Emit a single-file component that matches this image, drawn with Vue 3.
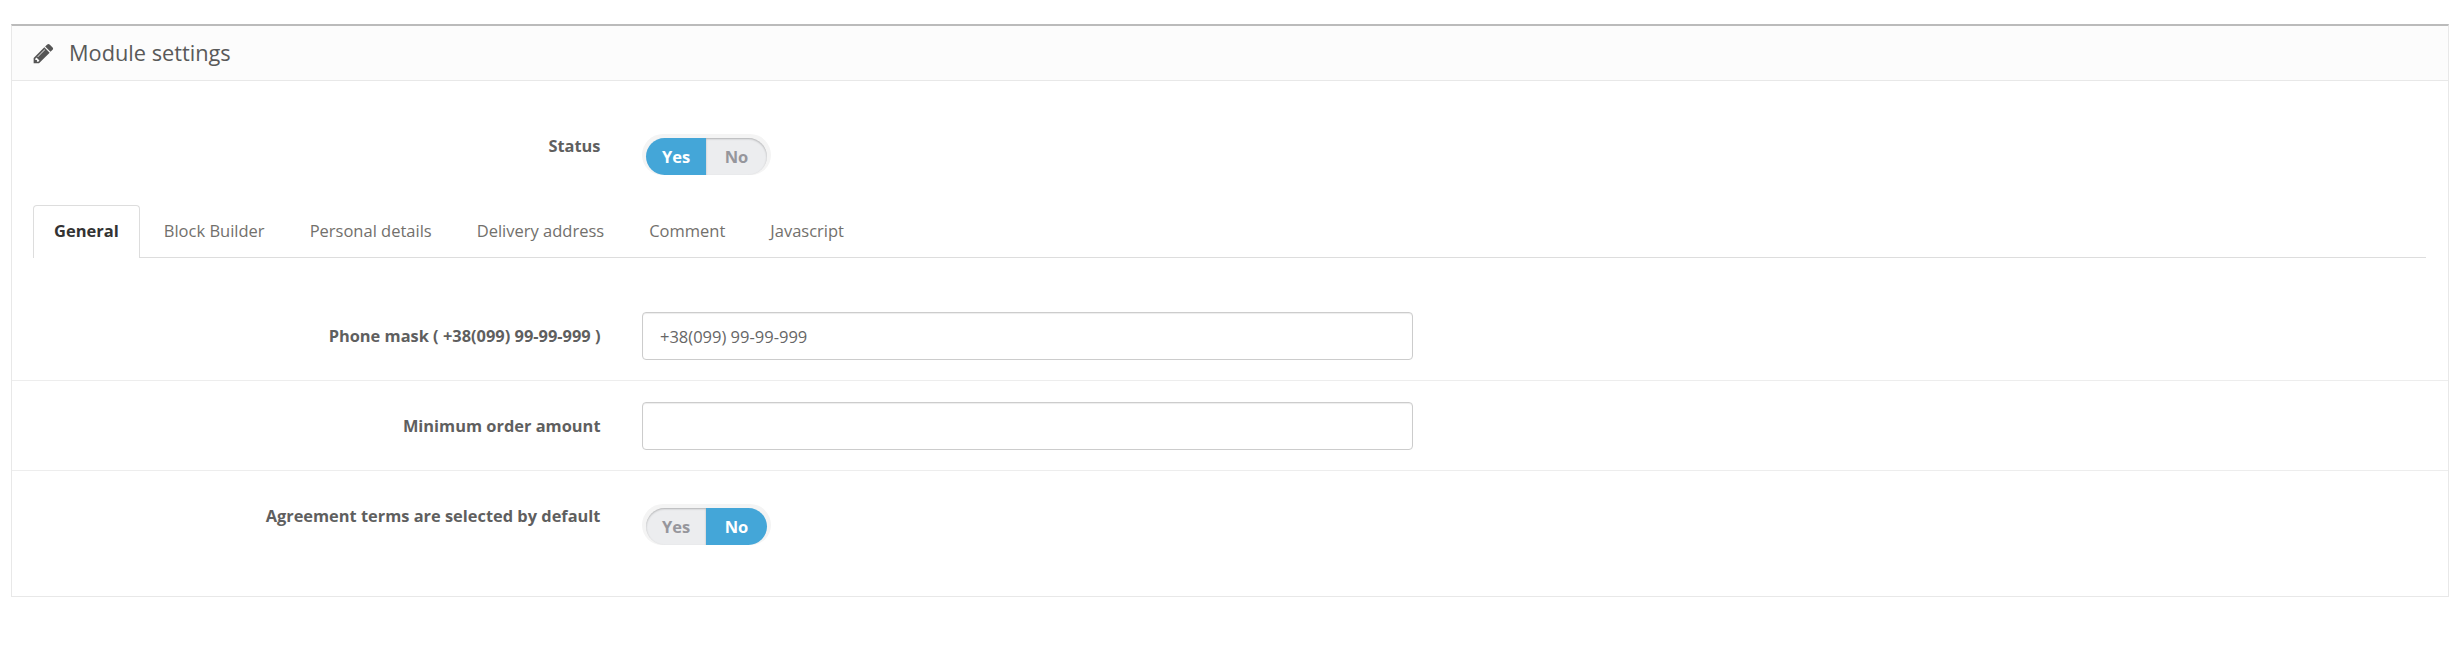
<script setup>
const tabs = ['General', 'Block Builder', 'Personal details', 'Delivery address', 'Comment', 'Javascript']
</script>

<template>
  <div class="page">
    <section class="panel">
      <header class="panel-head">
        <svg class="pencil" viewBox="0 0 1792 1792"><path fill="#555" d="M491 1536l91-91-235-235-91 91v107h128v128h107zm523-928q0-22-22-22-10 0-17 7l-542 542q-7 7-7 17 0 22 22 22 10 0 17-7l542-542q7-7 7-17zm-54-192l416 416-832 832h-416v-416zm683 96q0 53-37 90l-166 166-416-416 166-165q36-38 90-38 53 0 91 38l235 234q37 39 37 91z"/></svg>
        <h3 class="title">Module settings</h3>
      </header>
      <div class="panel-body">
        <div class="status-row">
          <label class="label label-top">Status</label>
          <div class="control">
            <div class="toggle">
              <span class="seg on left">Yes</span>
              <span class="seg off right">No</span>
            </div>
          </div>
        </div>
        <ul class="tabs">
          <li v-for="(t, i) in tabs" :key="t" class="tab" :class="{ active: i === 0 }">{{ t }}</li>
        </ul>
        <div class="row field-row">
          <label class="label label-mid">Phone mask ( +38(099) 99-99-999 )</label>
          <div class="control"><input class="input" value="+38(099) 99-99-999" /></div>
        </div>
        <div class="row field-row">
          <label class="label label-mid">Minimum order amount</label>
          <div class="control"><input class="input" value="" /></div>
        </div>
        <div class="row last-row">
          <label class="label label-top">Agreement terms are selected by default</label>
          <div class="control">
            <div class="toggle">
              <span class="seg off left">Yes</span>
              <span class="seg on right">No</span>
            </div>
          </div>
        </div>
      </div>
    </section>
  </div>
</template>

<style>
html, body { margin: 0; background: #fff; }
</style>

<style scoped>
.page {
  padding: 24px 9px 56px 11px;
  font-family: "Open Sans", sans-serif;
  font-size: 16px;
  color: #666;
}
.panel {
  border: 1px solid #e8e8e8;
  border-top: 2px solid #bbb;
  background: #fff;
}
.panel-head {
  box-sizing: border-box;
  display: flex;
  align-items: center;
  padding-left: 20px;
  background: #fcfcfc;
  border-bottom: 1px solid #e8e8e8;
  height: 55px;
}
.pencil { width: 23px; height: 23px; display: block; }
.title {
  margin: 0 0 2px 14px;
  font-size: 21.75px;
  font-weight: 400;
  line-height: 27px;
  color: #595959;
}
.panel-body { height: 515px; }
.status-row { display: flex; padding-top: 53px; height: 124px; box-sizing: border-box; }
.label {
  width: 611px;
  box-sizing: border-box;
  padding-right: 22.5px;
  text-align: right;
  font-weight: 700;
  font-size: 16.4px;
  line-height: 22px;
  color: #5f5f5f;
  flex: none;
}
.label-top { padding-top: 1px; }
.control { padding-left: 19px; }
.toggle {
  display: inline-flex;
  padding: 4px 4px 0;
  background: #f4f4f4;
  border-radius: 21px 21px 20px 20px;
}
.seg {
  height: 37px;
  width: 60px;
  box-sizing: border-box;
  display: flex;
  align-items: center;
  justify-content: center;
  font-size: 16.5px;
  font-weight: 700;
}
.seg.left { border-radius: 19px 0 0 19px; }
.seg.right { border-radius: 0 19px 19px 0; width: 61px; }
.seg.on { background: #44a6d8; color: #fff; }
.seg.off { background: #ecedef; color: #96969c; box-shadow: inset 0 1px 2px rgba(0,0,0,.25); }
.tabs {
  list-style: none;
  margin: 0 22px 33px 21px;
  padding: 0;
  display: flex;
  height: 53px;
  box-sizing: border-box;
  border-bottom: 1px solid #ddd;
}
.tab {
  height: 52px;
  box-sizing: border-box;
  padding: 15px 22.5px 0;
  font-size: 16.5px;
  line-height: 22px;
  color: #72706c;
}
.tab.active {
  background: #fff;
  border: 1px solid #ddd;
  border-bottom: 0;
  height: 53px;
  border-radius: 4px 4px 0 0;
  color: #333;
  font-weight: 700;
  padding: 14px 20px 0;
  margin-right: 1.5px;
}
.row { display: flex; border-bottom: 1px solid #ededed; }
.field-row { padding: 21px 0 20px; align-items: center; }
.last-row { border-bottom: 0; padding-top: 33px; }
.input {
  display: block;
  width: 771px;
  height: 48px;
  box-sizing: border-box;
  padding: 0 17px;
  border: 1px solid #ccc;
  border-radius: 4px;
  font-family: "Open Sans", sans-serif;
  font-size: 16.5px;
  color: #666;
  outline: none;
  box-shadow: inset 0 1px 1px rgba(0,0,0,.075);
}
</style>
